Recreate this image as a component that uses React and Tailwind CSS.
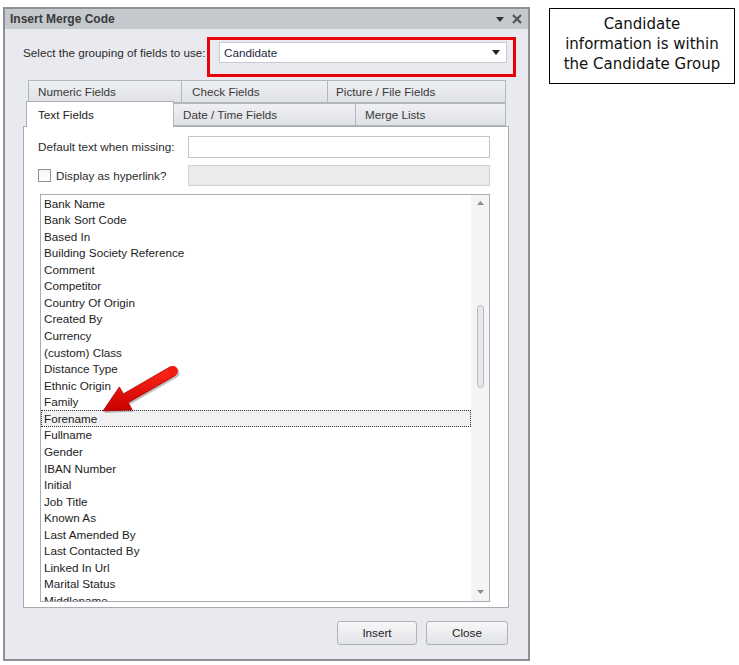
import React from "react";

const FIELDS = [
  "Bank Name",
  "Bank Sort Code",
  "Based In",
  "Building Society Reference",
  "Comment",
  "Competitor",
  "Country Of Origin",
  "Created By",
  "Currency",
  "(custom) Class",
  "Distance Type",
  "Ethnic Origin",
  "Family",
  "Forename",
  "Fullname",
  "Gender",
  "IBAN Number",
  "Initial",
  "Job Title",
  "Known As",
  "Last Amended By",
  "Last Contacted By",
  "Linked In Url",
  "Marital Status",
  "Middlename",
];

function Tab({ label, width, pad }) {
  return (
    <div
      className="h-full flex items-center border border-[#b3b6bc] -ml-px first:ml-0 bg-gradient-to-b from-[#eff0f3] to-[#dfe1e5] text-[#3a3a3a]"
      style={{ width, paddingLeft: pad }}
    >
      {label}
    </div>
  );
}

const ARROW = "175.4,375.4 170.6,366.6 123.3,393.9 119.4,386.9 103,411 132.1,409.7 128.2,402.7";

function Arrow() {
  // red annotation arrow pointing at "Forename"
  return (
    <svg className="absolute left-0 top-0 pointer-events-none" width="739" height="665" viewBox="0 0 739 665">
      <defs>
        <linearGradient id="ar" x1="0" y1="0" x2="0" y2="1">
          <stop offset="0" stopColor="#ff2a1a" />
          <stop offset="1" stopColor="#c80000" />
        </linearGradient>
      </defs>
      <g transform="translate(1.5,2)" opacity="0.3">
        <polygon points={ARROW} fill="#333" />
        <circle cx="173" cy="371" r="5" fill="#333" />
      </g>
      <polygon points={ARROW} fill="url(#ar)" stroke="#b00000" strokeWidth="0.8" strokeLinejoin="round" />
      <circle cx="173" cy="371" r="4.9" fill="#f01a10" />
    </svg>
  );
}

export default function App() {
  return (
    <div
      className="relative w-[739px] h-[665px] bg-white flex items-start text-[11.7px] text-[#222]"
      style={{ fontFamily: '"Liberation Sans", Arial, sans-serif' }}
    >
      {/* dialog */}
      <div className="ml-[3px] mt-[7px] w-[527px] h-[654px] border-2 border-[#8d9095] bg-[#e9eaef] flex flex-col">
        <div className="h-[20px] bg-[#c5c8cd] flex items-center justify-between pl-[5px] pr-[6px]">
          <span className="font-bold text-[12px] text-[#3a3a3a]">Insert Merge Code</span>
          <div className="flex items-center gap-[8px]">
            <svg width="8" height="5" viewBox="0 0 8 5">
              <polygon points="0,0 8,0 4,5" fill="#333" />
            </svg>
            <svg width="10" height="10" viewBox="0 0 10 10">
              <path d="M1 1 L9 9 M9 1 L1 9" stroke="#555" strokeWidth="2.2" />
            </svg>
          </div>
        </div>

        <div className="relative flex-1 flex flex-col">
          <div className="mt-[13px] h-[21px] flex items-center pl-[18px]">
            <span className="w-[196px] text-[#2b2b2b]">Select the grouping of fields to use:</span>
            <div className="w-[288px] h-full bg-white border border-[#c7c9ce] flex items-center justify-between pl-[4px] pr-[6px] text-[#1f2a44]">
              <span>Candidate</span>
              <svg width="8" height="5" viewBox="0 0 8 5">
                <polygon points="0,0 8,0 4,5" fill="#222" />
              </svg>
            </div>
          </div>
          <div className="absolute left-[202px] top-[8px] w-[309px] h-[40px] border-[3px] border-[#e8000b]" />

          {/* tabs */}
          <div className="mt-[17px] ml-[18px] w-[486px] flex flex-col">
            <div className="h-[23px] flex pl-[5px]">
              <Tab label="Numeric Fields" width={154} pad={9} />
              <Tab label="Check Fields" width={147} pad={10} />
              <Tab label="Picture / File Fields" width={179} pad={8} />
            </div>
            <div className="h-[23px] flex pl-[3px] relative z-10">
              <div className="w-[148px] h-[26px] -mt-[2px] bg-white border border-b-0 border-[#a9acb2] flex items-center pl-[11px] text-[#222]">
                Text Fields
              </div>
              <Tab label="Date / Time Fields" width={183} pad={9} />
              <Tab label="Merge Lists" width={151} pad={9} />
            </div>
            <div className="h-[482px] bg-white border border-[#a9acb2] flex flex-col">
              <div className="mt-[9px] h-[22px] flex items-center pl-[14px]">
                <span className="w-[150px] text-[#2b2b2b]">Default text when missing:</span>
                <div className="w-[302px] h-full bg-white border border-[#c3c5ca]" />
              </div>
              <div className="mt-[7px] h-[21px] flex items-center pl-[14px]">
                <div className="w-[150px] flex items-center">
                  <div className="w-[13px] h-[13px] border border-[#8f9297] bg-gradient-to-b from-[#f4f4f4] to-[#ffffff]" />
                  <span className="ml-[5px] text-[#2b2b2b]">Display as hyperlink?</span>
                </div>
                <div className="w-[302px] h-full bg-[#ebebee] border border-[#cfd1d5]" />
              </div>
              <div className="mt-[8px] ml-[16px] w-[450px] h-[408px] border border-[#a9acb2] flex bg-white">
                <div className="flex-1 overflow-hidden">
                  {FIELDS.map((f) => (
                    <div
                      key={f}
                      className={
                        "h-[16.57px] flex items-center pl-[3px] text-[#1c1c1c] " +
                        (f === "Forename"
                          ? "bg-[#f1f1f3] outline-1 outline-dotted outline-[#333] -outline-offset-1"
                          : "")
                      }
                    >
                      {f}
                    </div>
                  ))}
                </div>
                <div className="w-[18px] bg-[#f4f4f7] flex flex-col items-center">
                  <svg className="mt-[6px]" width="7" height="4" viewBox="0 0 7 4">
                    <polygon points="0,4 7,4 3.5,0" fill="#8a8d93" />
                  </svg>
                  <div className="mt-[100px] w-[7px] h-[83px] rounded-full border border-[#b5b8bf] bg-[#e6e7eb]" />
                  <svg className="mt-auto mb-[7px]" width="7" height="4" viewBox="0 0 7 4">
                    <polygon points="0,0 7,0 3.5,4" fill="#8a8d93" />
                  </svg>
                </div>
              </div>
            </div>
          </div>

          <div className="mt-[13px] flex justify-end gap-[9px] pr-[20px]">
            <button className="w-[80px] h-[24px] rounded-[3px] border border-[#aeb1b7] bg-gradient-to-b from-[#f7f7f9] to-[#e2e3e7] text-[#222]">
              Insert
            </button>
            <button className="w-[82px] h-[24px] rounded-[3px] border border-[#aeb1b7] bg-gradient-to-b from-[#f7f7f9] to-[#e2e3e7] text-[#222]">
              Close
            </button>
          </div>
        </div>
      </div>

      {/* annotation */}
      <div
        className="ml-[19px] mt-[8px] w-[186px] h-[76px] border border-black flex items-center justify-center pb-[4px] text-center text-[15px] leading-[20px] text-[#111]"
        style={{ fontFamily: '"DejaVu Sans", sans-serif' }}
      >
        Candidate
        <br />
        information is within
        <br />
        the Candidate Group
      </div>

      <Arrow />
    </div>
  );
}
